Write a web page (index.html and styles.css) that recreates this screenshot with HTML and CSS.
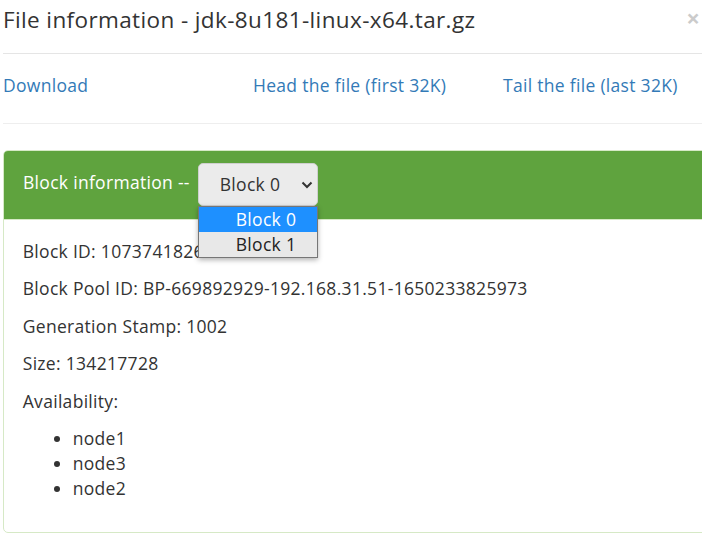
FILE: index.html
```html
<!DOCTYPE html>
<html lang="en">
<head>
<meta charset="utf-8">
<title>File information</title>
<link rel="stylesheet" href="styles.css">
</head>
<body>
<div class="modal">
  <div class="modal-header">
    <h4 class="modal-title">File information - jdk-8u181-linux-x64.tar.gz</h4>
    <span class="close">×</span>
  </div>
  <div class="modal-body">
    <div class="links">
      <a class="col">Download</a>
      <a class="col">Head the file (first 32K)</a>
      <a class="col">Tail the file (last 32K)</a>
    </div>
    <hr class="divider">
    <div class="panel">
      <div class="panel-heading">
        <span class="panel-label">Block information --</span>
        <span class="select-wrap">
          <span class="select">Block 0</span>
          <svg class="chevron" width="12" height="8" viewBox="0 0 12 8"><path d="M1.5 1.5 L6 6 L10.5 1.5" fill="none" stroke="#333" stroke-width="2"/></svg>
          <span class="listbox">
            <span class="option selected">Block 0</span>
            <span class="option">Block 1</span>
          </span>
        </span>
      </div>
      <div class="panel-body">
        <p>Block ID: 1073741826</p>
        <p>Block Pool ID: BP-669892929-192.168.31.51-1650233825973</p>
        <p>Generation Stamp: 1002</p>
        <p>Size: 134217728</p>
        <p>Availability:</p>
        <ul>
          <li>node1</li>
          <li>node3</li>
          <li>node2</li>
        </ul>
      </div>
    </div>
  </div>
</div>
</body>
</html>
```
FILE: styles.css
```css
html, body {
  margin: 0;
  padding: 0;
  overflow: hidden;
  background: #fff;
}
body {
  font-family: "Open Sans", "Noto Sans", sans-serif;
  font-size: 17.5px;
  line-height: 25px;
  letter-spacing: 0.3px;
  color: #333;
}
.modal {
  width: 750px;
  margin-left: 3px;
}
.modal-header {
  display: flex;
  align-items: flex-start;
  padding: 4px 0 17px 0;
  border-bottom: 1px solid #e5e5e5;
}
.modal-title {
  margin: 0;
  font-size: 22.5px;
  line-height: 32px;
  letter-spacing: 0.38px;
  font-weight: normal;
  color: #333;
  flex: 1;
}
.close {
  font-size: 24px;
  line-height: 26px;
  font-weight: bold;
  letter-spacing: 0;
  color: #000;
  opacity: 0.2;
  margin-right: 53px;
  margin-top: 1px;
}
.modal-body {
  padding-top: 18.75px;
}
.links {
  display: flex;
}
.links .col {
  width: 250px;
  color: #337ab7;
  text-decoration: none;
}
.divider {
  margin: 25px 0 26px 0;
  border: 0;
  border-top: 1px solid #eee;
}
.panel {
  border: 1px solid #d6e9c6;
  border-radius: 5px;
}
.panel-heading {
  display: flex;
  align-items: center;
  background: #5fa33e;
  color: #fff;
  padding: 12.5px 19px;
  border-bottom: 1px solid #d6e9c6;
  border-radius: 4px 4px 0 0;
}
.panel-label {
  padding-bottom: 4px;
}
.select-wrap {
  position: relative;
  margin-left: 8px;
  display: inline-block;
}
.select {
  display: block;
  box-sizing: border-box;
  width: 120px;
  height: 43px;
  line-height: 41px;
  padding-left: 21px;
  background: #ebebeb;
  border: 1px solid #cfcfcf;
  border-radius: 5px;
  color: #333;
}
.chevron {
  position: absolute;
  left: 103px;
  top: 18px;
}
.listbox {
  position: absolute;
  left: 0;
  top: 43px;
  width: 120px;
  box-sizing: border-box;
  border: 1px solid #767676;
  background: #e8e8e8;
  box-shadow: 0 2px 5px rgba(0, 0, 0, 0.3);
  display: flex;
  flex-direction: column;
}
.option {
  display: block;
  height: 25px;
  line-height: 25px;
  padding-left: 37px;
  color: #222;
}
.option.selected {
  background: #1e90ff;
  color: #fff;
}
.panel-body {
  padding: 18.75px;
}
.panel-body p {
  margin: 0 0 12.5px 0;
}
.panel-body ul {
  margin: 0 0 12.5px 0;
  padding-left: 50px;
}
```
